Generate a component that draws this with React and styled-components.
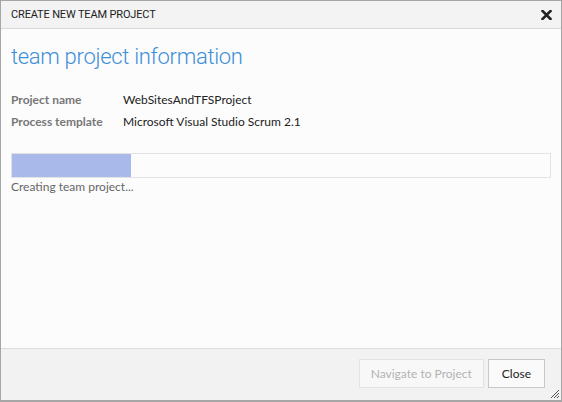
import React from "react";
import styled, { createGlobalStyle } from "styled-components";

const Global = createGlobalStyle`
  html, body { margin: 0; padding: 0; background: #ffffff; }
  * { box-sizing: border-box; }
`;

const FONT = `"Lato", "Open Sans", sans-serif`;
const ALT = `"Roboto", "Lato", sans-serif`;

const Window = styled.div`
  position: relative;
  width: 562px;
  height: 402px;
  border: 1px solid #a6a6a6;
  border-bottom-width: 2px;
  display: flex;
  flex-direction: column;
  font-family: ${FONT};
  background: #fcfcfc;
  overflow: hidden;
`;

const TitleBar = styled.div`
  height: 28px;
  flex: none;
  background: #f3f3f3;
  border-bottom: 1px solid #d9d9d9;
  display: flex;
  align-items: center;
  justify-content: space-between;
  padding: 0 9px 0 10px;
`;

const Title = styled.span`
  font-family: ${ALT};
  font-size: 11px;
  letter-spacing: -0.15px;
  color: #222;
`;

const CloseX = styled.button`
  border: none;
  background: none;
  padding: 0;
  width: 12px;
  height: 12px;
  display: flex;
  align-items: center;
  justify-content: center;
  cursor: pointer;
`;

const Body = styled.div`
  flex: 1;
  padding: 12px 10px 0 10px;
  display: flex;
  flex-direction: column;
`;

const Heading = styled.h1`
  margin: 0;
  font-family: ${ALT};
  font-size: 22px;
  letter-spacing: -0.3px;
  font-weight: 300;
  color: #3d8fd8;
  line-height: 32px;
`;

const InfoGrid = styled.div`
  margin-top: 15px;
  display: grid;
  grid-template-columns: 112px auto;
  grid-auto-rows: 22px;
  align-items: center;
`;

const Label = styled.span`
  font-size: 12px;
  font-weight: 700;
  color: #777;
`;

const Value = styled.span`
  font-size: 12px;
  color: #222;
`;

const Progress = styled.div`
  margin-top: 21px;
  height: 25px;
  border: 1px solid #e3e3e3;
  background: #fcfcfc;
  display: flex;
`;

const Fill = styled.div`
  height: 100%;
  background: #a9b9e9;
`;

const Status = styled.div`
  margin-top: 1px;
  font-size: 12px;
  color: #666;
  line-height: 16px;
`;

const Footer = styled.div`
  height: 52px;
  flex: none;
  background: #f2f2f2;
  border-top: 1px solid #dcdcdc;
  display: flex;
  align-items: center;
  justify-content: flex-end;
  gap: 4px;
  padding: 0 16px 2px 0;
`;

const Button = styled.button`
  height: 29px;
  padding: 0 ${(p) => (p.$wide ? "11px" : "13px")};
  font-family: ${FONT};
  font-size: 12px;
  color: ${(p) => (p.disabled ? "#b3b3b3" : "#222")};
  background: ${(p) => (p.disabled ? "#f8f8f8" : "#fafafa")};
  border: 1px solid ${(p) => (p.disabled ? "#e3e3e3" : "#c8c8c8")};
  border-radius: 0;
  cursor: ${(p) => (p.disabled ? "default" : "pointer")};
`;

const Grip = styled.svg`
  position: absolute;
  right: 1px;
  bottom: 1px;
`;

export default function App() {
  const progress = 119;
  return (
    <>
      <Global />
      <Window>
        <TitleBar>
          <Title>CREATE NEW TEAM PROJECT</Title>
          <CloseX aria-label="Close">
            <svg width="11" height="10" viewBox="0 0 11 10">
              <path d="M1.5 1 L9.5 9 M9.5 1 L1.5 9" stroke="#222" strokeWidth="2.6" strokeLinecap="square" />
            </svg>
          </CloseX>
        </TitleBar>
        <Body>
          <Heading>team project information</Heading>
          <InfoGrid>
            <Label>Project name</Label>
            <Value>WebSitesAndTFSProject</Value>
            <Label>Process template</Label>
            <Value>Microsoft Visual Studio Scrum 2.1</Value>
          </InfoGrid>
          <Progress>
            <Fill style={{ width: progress }} />
          </Progress>
          <Status>Creating team project...</Status>
        </Body>
        <Footer>
          <Button disabled $wide>Navigate to Project</Button>
          <Button>Close</Button>
        </Footer>
        <Grip width="11" height="11" viewBox="0 0 11 11">
          <path d="M10 2 L2 10 M10 5 L5 10 M10 8 L8 10" stroke="#555" strokeWidth="1" />
        </Grip>
      </Window>
    </>
  );
}
